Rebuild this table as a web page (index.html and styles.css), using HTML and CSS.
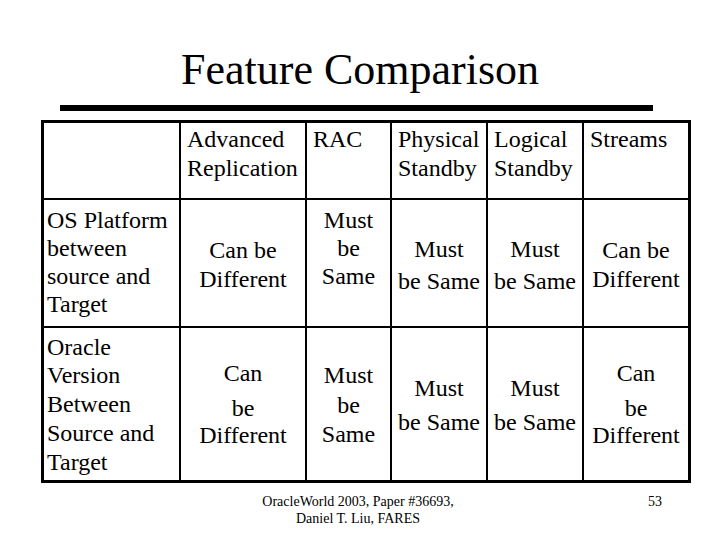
FILE: index.html
```html
<!DOCTYPE html>
<html>
<head>
<meta charset="utf-8">
<link rel="stylesheet" href="styles.css">
</head>
<body>
<div class="slide">
  <h1 class="title">Feature Comparison</h1>
  <div class="rule"></div>
  <div class="grid">
    <div class="cell head"></div>
    <div class="cell head"><div class="ln">Advanced</div><div class="ln">Replication</div></div>
    <div class="cell head"><div class="ln">RAC</div></div>
    <div class="cell head"><div class="ln">Physical</div><div class="ln">Standby</div></div>
    <div class="cell head"><div class="ln">Logical</div><div class="ln">Standby</div></div>
    <div class="cell head"><div class="ln">Streams</div></div>

    <div class="cell label r1"><div class="ln">OS Platform</div><div class="ln">between</div><div class="ln">source and</div><div class="ln">Target</div></div>
    <div class="cell val p36"><div class="ln">Can be</div><div class="ln">Different</div></div>
    <div class="cell val p6 tight"><div class="ln">Must</div><div class="ln">be</div><div class="ln">Same</div></div>
    <div class="cell val p35"><div class="ln">Must</div><div class="ln gap3">be Same</div></div>
    <div class="cell val p35"><div class="ln">Must</div><div class="ln gap3">be Same</div></div>
    <div class="cell val p36"><div class="ln">Can be</div><div class="ln">Different</div></div>

    <div class="cell label r2"><div class="ln">Oracle</div><div class="ln">Version</div><div class="ln">Between</div><div class="ln">Source and</div><div class="ln">Target</div></div>
    <div class="cell val p31"><div class="ln">Can</div><div class="ln gap6">be</div><div class="ln gapn2">Different</div></div>
    <div class="cell val p33 loose"><div class="ln">Must</div><div class="ln">be</div><div class="ln">Same</div></div>
    <div class="cell val p46"><div class="ln">Must</div><div class="ln gap5">be Same</div></div>
    <div class="cell val p46"><div class="ln">Must</div><div class="ln gap5">be Same</div></div>
    <div class="cell val p31"><div class="ln">Can</div><div class="ln gap6">be</div><div class="ln gapn2">Different</div></div>
  </div>
  <div class="footer">
    <div class="credit">OracleWorld 2003, Paper #36693,<br>Daniel T. Liu, FARES</div>
    <div class="page">53</div>
  </div>
</div>
</body>
</html>
```

FILE: styles.css
```css
html, body {
  margin: 0;
  padding: 0;
  background: #ffffff;
}

.slide {
  width: 720px;
  height: 540px;
  font-family: "Liberation Serif", "Times New Roman", serif;
  color: #000000;
  padding-top: 45px;
  box-sizing: border-box;
}

.title {
  margin: 0;
  font-size: 44px;
  font-weight: normal;
  line-height: 50px;
  text-align: center;
}

.rule {
  margin: 10px 0 0 60px;
  width: 593px;
  height: 6px;
  background: #000000;
}

.grid {
  margin: 9px 0 0 41px;
  width: 650px;
  box-sizing: border-box;
  padding: 3px;
  background: #000000;
  display: grid;
  grid-template-columns: 135px 124px 83px 94px 94px 104px;
  grid-template-rows: 75px 126px 152px;
  gap: 2px;
}

.cell {
  background: #ffffff;
  font-size: 24px;
  line-height: 29px;
  white-space: nowrap;
}

.head {
  padding: 2px 0 0 6px;
}

.label {
  padding-left: 3px;
}

.r1 {
  padding-top: 6px;
  line-height: 28px;
}

.r2 {
  padding-top: 4.5px;
  line-height: 28.75px;
}

.val {
  text-align: center;
}

.tight { line-height: 28px; }
.loose { line-height: 29.5px; }

.p6 { padding-top: 6px; }
.p31 { padding-top: 31px; }
.p33 { padding-top: 33px; }
.p35 { padding-top: 35px; }
.p36 { padding-top: 36px; }
.p46 { padding-top: 46px; }

.gap3 { margin-top: 3px; }
.gap5 { margin-top: 5px; }
.gap6 { margin-top: 6px; }
.gapn2 { margin-top: -2px; }

.footer {
  display: flex;
  margin-top: 10px;
  padding-left: 200px;
  font-size: 14px;
  line-height: 17px;
}

.credit {
  width: 316px;
  text-align: center;
}

.page {
  margin-left: 132px;
}
```
